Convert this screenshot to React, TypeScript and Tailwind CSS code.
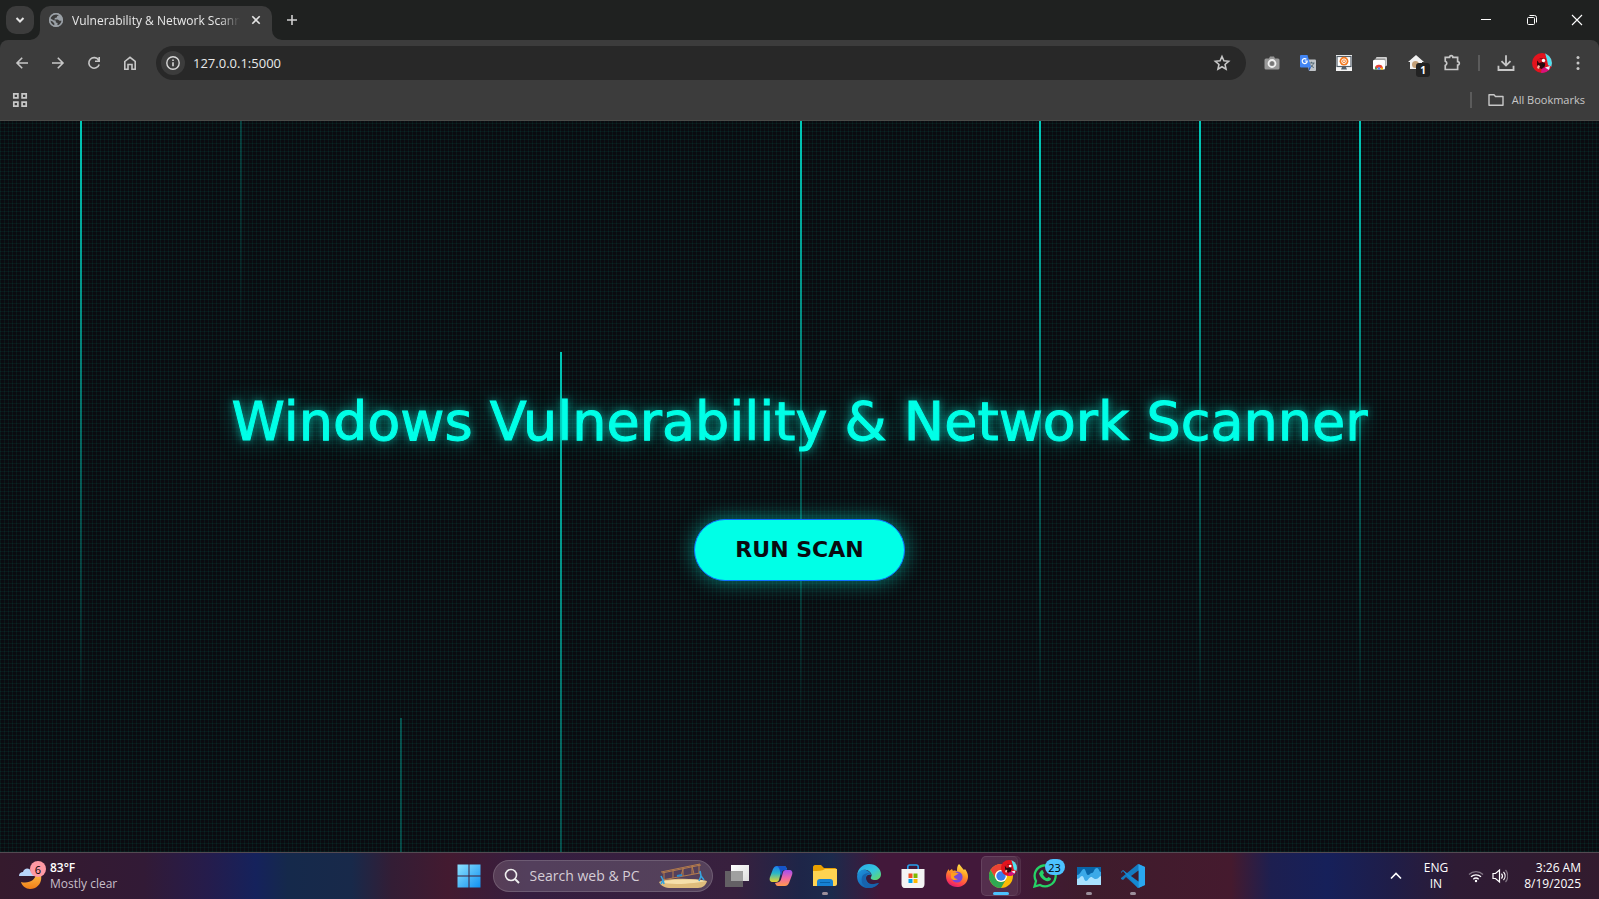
import type { ReactNode } from "react";

type IconProps = { className?: string };

function Stroke({ children, className = "size-4", width = 1.6 }: { children: ReactNode; className?: string; width?: number }) {
  return (
    <svg viewBox="0 0 16 16" className={className} fill="none" stroke="currentColor" strokeWidth={width} aria-hidden="true">
      {children}
    </svg>
  );
}

function IconButton({ label, children, className = "w-9" }: { label: string; children: ReactNode; className?: string }) {
  return (
    <button type="button" aria-label={label} className={`flex h-8 shrink-0 items-center justify-center text-[#c7c7c7] ${className}`}>
      {children}
    </button>
  );
}

function Globe() {
  return (
    <svg viewBox="0 0 16 16" className="size-4 shrink-0" aria-hidden="true">
      <circle cx="8" cy="8" r="7" fill="#9aa0a6" />
      <path d="M6.600 2.200 9.800 2l1 1.400-1.600.5-.4 1.700-1.900.5-.5 1.300h3.500l1.500 1.400 2.600-.1c-.1 2-1 3.600-2.600 4.500l-2-.3.2-2-1.700-.5-.3-1.800-2.100-.4L2.100 6.200C2.700 4.300 4.500 2.700 6.600 2.200Z" fill="#3c3c3c" />
      <path d="m2 8.600 2.600 1 1.800 1.900-.2 2.300C4 13.200 2.200 11.300 2 8.600Z" fill="#3c3c3c" />
      <circle cx="8" cy="8" r="6.300" fill="none" stroke="#9aa0a6" strokeWidth="1.400" />
    </svg>
  );
}

function Avatar({ className = "size-5" }: IconProps) {
  return (
    <svg viewBox="0 0 20 20" className={className} aria-hidden="true">
      <clipPath id="avatar-clip"><circle cx="10" cy="10" r="10" /></clipPath>
      <g clipPath="url(#avatar-clip)">
        <rect width="20" height="20" fill="#e3131d" />
        <path d="M13 0h7v14l-4-2-1-5Z" fill="#4fe0ee" />
        <path d="m10 14 9 1-4 5H9Z" fill="#d6127f" />
        <path d="M13 14.500 18 13l-1 4Z" fill="#e9f6fa" />
        <path d="M5 8c2-3 7-4 9-2l-1 6-3 4-3-1-2-3Z" fill="#33070e" />
        <path d="M4.500 6.500 13 5l2 4-1 2-3-2-4 1Z" fill="#d41520" />
        <circle cx="11.500" cy="7.500" r="1.700" fill="#fff" />
        <path d="m6 12 2 1-1 3-2-1Z" fill="#f3b5a5" />
        <path d="m10 11 3 .5-1 4Z" fill="#111" />
      </g>
    </svg>
  );
}

function Camera() {
  return (
    <svg viewBox="0 0 16 16" className="size-4" aria-hidden="true">
      <path d="M2 3.500h3L6 1.500h4l1 2h3A1.500 1.500 0 0 1 15.500 5v8a1.500 1.500 0 0 1-1.500 1.500H2A1.500 1.500 0 0 1 .5 13V5A1.500 1.500 0 0 1 2 3.500Z" fill="#999" />
      <circle cx="8" cy="8.500" r="3.500" fill="none" stroke="#f1f1f1" strokeWidth="1.800" />
      <circle cx="8" cy="8.500" r="2" fill="#777" />
    </svg>
  );
}

function Translate() {
  return (
    <svg viewBox="0 0 16 16" className="size-4" aria-hidden="true">
      <path d="M6 4.500h9a1 1 0 0 1 1 1V15a1 1 0 0 1-1 1H9Z" fill="#bfc3c7" />
      <path d="M9 8h5.500M11.500 6.800V8M13.500 8c-.4 2.200-1.900 3.800-4 4.500M10.300 9.500c.8 1.500 2 2.500 3.600 3.100" stroke="#546a76" strokeWidth="1" fill="none" />
      <path d="M1 0h6.500L11 12.500H1a1 1 0 0 1-1-1V1a1 1 0 0 1 1-1Z" fill="#4285f4" />
      <path d="M8.600 12.500H11L9 16Z" fill="#1a54c4" />
      <path d="M4.800 6h2.400a2.500 2.500 0 1 1-.8-1.800" stroke="#fff" strokeWidth="1.200" fill="none" />
    </svg>
  );
}

function MonitorExtension() {
  return (
    <svg viewBox="0 0 16 16" className="size-4" aria-hidden="true">
      <rect width="16" height="16" fill="#f4f4f4" />
      <rect x="1" y="1.500" width="14" height="10" fill="#fff" stroke="#55606b" strokeWidth="1.200" />
      <circle cx="8" cy="6.200" r="4.400" fill="#f47a20" />
      <circle cx="8" cy="6.200" r="2.300" fill="none" stroke="#fff" />
      <circle cx="8" cy="6.200" r=".9" fill="#fff" />
      <path d="M6 12h4l1 2.500H5Z" fill="#55606b" />
    </svg>
  );
}

function Stack() {
  return (
    <svg viewBox="0 0 16 16" className="size-4" aria-hidden="true">
      <rect x="4" y="2" width="11" height="9" rx="1" fill="#cfcfcf" />
      <rect x="2.500" y="3.500" width="11" height="9" rx="1" fill="#999" />
      <rect x="1" y="5" width="12" height="9.500" rx="1" fill="#fff" />
      <path d="M3 14.500a4 4 0 0 1 8-1.500l-2.500.2a2 2 0 0 0-2.700 0Z" fill="#ea4335" />
      <path d="M3 14.500a4 4 0 0 1 .6-2.800l1.900 2.800Z" fill="#34a853" />
      <path d="M8.500 14.500 9 12.500l2 .5v1.500Z" fill="#fbbc04" />
      <circle cx="7" cy="13.500" r="1.300" fill="#4285f4" />
    </svg>
  );
}

function Rain() {
  return (
    <div className="pointer-events-none absolute inset-0 overflow-hidden" aria-hidden="true">
      <i className="absolute left-[5%] top-0 h-[82%] w-[2px] bg-linear-to-b from-[#00c8b8] to-transparent" />
      <i className="absolute left-[15%] top-0 h-[30%] w-[2px] bg-linear-to-b from-[#00c8b8]/25 to-transparent" />
      <i className="absolute left-1/4 top-[597px] h-full w-[2px] bg-linear-to-b from-[#00c8b8]/35 to-transparent" />
      <i className="absolute left-[35%] top-[231px] h-full w-[2px] bg-linear-to-b from-[#00c8b8] to-transparent" />
      <i className="absolute left-1/2 top-0 h-[82%] w-[2px] bg-linear-to-b from-[#00c8b8] to-transparent" />
      <i className="absolute left-[65%] top-0 h-[82%] w-[2px] bg-linear-to-b from-[#00c8b8] to-transparent" />
      <i className="absolute left-3/4 top-0 h-[82%] w-[2px] bg-linear-to-b from-[#00c8b8] to-transparent" />
      <i className="absolute left-[85%] top-0 h-[82%] w-[2px] bg-linear-to-b from-[#00c8b8] to-transparent" />
    </div>
  );
}

function TabStrip() {
  return (
    <header className="flex h-10 shrink-0 items-start bg-[#1f2120]">
      <button type="button" aria-label="Search tabs" className="ml-1.5 mt-1.5 flex size-7 shrink-0 items-center justify-center rounded-[10px] bg-[#3c3c3c] text-[#e3e3e3]">
        <Stroke width={2}><path d="m4.500 6 3.500 3.500L11.500 6" /></Stroke>
      </button>
      <div className="relative ml-1.5 mt-1.5 flex h-[34px] w-[232px] shrink-0 items-center rounded-t-[10px] bg-[#3c3c3c] pb-1.5 pl-2 pr-2">
        <svg viewBox="0 0 10 10" className="absolute -left-[10px] bottom-0 size-[10px]" aria-hidden="true"><path d="M10 0v10H0A10 10 0 0 0 10 0Z" fill="#3c3c3c" /></svg>
        <svg viewBox="0 0 10 10" className="absolute -right-[10px] bottom-0 size-[10px]" aria-hidden="true"><path d="M0 0v10h10A10 10 0 0 1 0 0Z" fill="#3c3c3c" /></svg>
        <Globe />
        <span className="ml-2 min-w-0 flex-1 overflow-hidden whitespace-nowrap pt-0.5 text-[12px] leading-4 text-[#e8e8e8] mask-r-from-88% mask-r-to-100%">Vulnerability &amp; Network Scanner</span>
        <button type="button" aria-label="Close tab" className="ml-2 flex size-4 items-center justify-center text-[#e3e3e3]">
          <Stroke width={1.6}><path d="m4.300 4.300 7.400 7.400m0-7.400-7.400 7.400" /></Stroke>
        </button>
      </div>
      <button type="button" aria-label="New tab" className="ml-1.5 mt-1.5 flex size-7 items-center justify-center text-[#d0d0d0]">
        <Stroke><path d="M8 3v10M3 8h10" /></Stroke>
      </button>
      <div className="ml-auto flex text-white">
        <button type="button" aria-label="Minimize" className="flex h-10 w-[46px] items-center justify-center"><Stroke width={1}><path d="M3 7.500h10" /></Stroke></button>
        <button type="button" aria-label="Restore" className="flex h-10 w-[46px] items-center justify-center">
          <Stroke width={1}><rect x="3.500" y="5.500" width="7" height="7" rx="1" /><path d="M5.500 3.500h5a2 2 0 0 1 2 2v5" /></Stroke>
        </button>
        <button type="button" aria-label="Close" className="flex h-10 w-[44px] items-center justify-center"><Stroke width={1.1}><path d="m3 3 10 10m0-10L3 13" /></Stroke></button>
      </div>
    </header>
  );
}

function Toolbar() {
  return (
    <div className="flex h-[46px] shrink-0 items-center rounded-t-lg bg-[#3c3c3c] pl-1 pr-[3px]">
      <IconButton label="Back"><Stroke><path d="M14 8H3m5.200-5.300L3 8l5.200 5.300" /></Stroke></IconButton>
      <IconButton label="Forward"><Stroke><path d="M2 8h11M7.800 2.700 13 8l-5.200 5.300" /></Stroke></IconButton>
      <IconButton label="Reload"><Stroke><path d="M13.200 9.500A5.300 5.300 0 1 1 12.600 5M13.200 2v4.200H9" /></Stroke></IconButton>
      <IconButton label="Home"><Stroke><path d="M2.800 6.500 8 2.300l5.200 4.200v7.700H10V9.500H6v4.700H2.800Z" /></Stroke></IconButton>
      <div className="ml-2 flex h-[34px] min-w-0 flex-1 items-center rounded-full bg-[#282828] pl-[5px] pr-1.5">
        <button type="button" aria-label="Site information" className="flex size-6 shrink-0 items-center justify-center rounded-full bg-[#3c3c3c] text-[#d8d8d8]">
          <Stroke width={1.4}><circle cx="8" cy="8" r="6.200" /><path d="M8 7.200v4M8 4.500V6" strokeWidth="1.600" /></Stroke>
        </button>
        <input aria-label="Address" defaultValue="127.0.0.1:5000" className="ml-2 min-w-0 flex-1 bg-transparent text-[13px] leading-5 text-[#e8e8e8] outline-none" />
        <IconButton label="Bookmark this tab">
          <Stroke width={1.4} className="size-[18px]"><path d="m8 2.200 1.700 3.900 4.200.4-3.200 2.800.9 4.200L8 11.300l-3.600 2.200.9-4.200L2.100 6.500l4.200-.4Z" /></Stroke>
        </IconButton>
      </div>
      <div className="ml-2 flex items-center">
        <IconButton label="Screenshot"><Camera /></IconButton>
        <IconButton label="Translate"><Translate /></IconButton>
        <IconButton label="Screen recorder"><MonitorExtension /></IconButton>
        <IconButton label="Window extension"><Stack /></IconButton>
        <IconButton label="Home extension" className="relative w-9">
          <svg viewBox="0 0 16 16" className="size-4" aria-hidden="true"><path d="M8 0 0 7h2v7h12V7h2Z" fill="#f1f1f1" /><circle cx="7.500" cy="9.500" r="3.500" fill="#c3a078" /></svg>
          <span className="absolute bottom-0.5 right-1 flex h-[14px] w-[14px] items-center justify-center rounded-[3px] bg-[#222] text-[10px] font-bold leading-none text-white">1</span>
        </IconButton>
        <IconButton label="Extensions">
          <Stroke className="size-[18px]" width={1.5}><path d="M2 3h3.800a1.500 1.500 0 0 1 3 0h4.200v3.800a1.500 1.500 0 0 1 0 3v4H2v-3.600a2 2 0 0 0 0-3.800Z" /></Stroke>
        </IconButton>
        <div className="mx-2 h-4 w-[2px] bg-[#5b5b5b]" />
        <IconButton label="Downloads">
          <Stroke className="size-[18px]"><path d="M8 1v9M4 6.300l4 4 4-4M1.300 10.500v3.700h13.400v-3.700" /></Stroke>
        </IconButton>
        <IconButton label="Profile"><Avatar /></IconButton>
        <IconButton label="Menu">
          <svg viewBox="0 0 16 16" className="size-4" fill="currentColor" aria-hidden="true"><circle cx="8" cy="2.500" r="1.500" /><circle cx="8" cy="8" r="1.500" /><circle cx="8" cy="13.500" r="1.500" /></svg>
        </IconButton>
      </div>
    </div>
  );
}

function BookmarksBar() {
  return (
    <nav aria-label="Bookmarks" className="flex h-[35px] shrink-0 items-center justify-between border-b border-[#4b4b49] bg-[#3c3c3c] pb-1.5 pl-3 pr-3.5 text-[#c7c7c7]">
      <button type="button" aria-label="Apps"><Stroke width={1.7}><path d="M1.800 1.800h4.100v4.100H1.800Zm8.300 0h4.100v4.100h-4.100ZM1.800 10.100h4.100v4.100H1.800Zm8.300 0h4.100v4.100h-4.100Z" /></Stroke></button>
      <div className="flex items-center">
        <div className="mr-4 h-4 w-[2px] bg-[#5b5b5b]" />
        <button type="button" className="flex items-center gap-2 text-[11px] leading-4">
          <Stroke width={1.4}><path d="M1 13.300V2.700h5l1.500 1.800H15v8.800Z" strokeLinejoin="round" /></Stroke>
          All Bookmarks
        </button>
      </div>
    </nav>
  );
}

function TaskButton({ label, children, dot, active }: { label: string; children: ReactNode; dot?: boolean; active?: boolean }) {
  return (
    <button type="button" aria-label={label} className="relative flex h-[46px] w-11 shrink-0 items-center justify-center">
      {active && <span className="absolute left-0.5 top-[3px] h-10 w-10 rounded-[5px] border border-white/5 bg-white/5" />}
      {active && <span className="absolute left-0.5 top-[3px] h-10 w-[37px] rounded-[5px] border border-white/5 bg-white/5" />}
      <span className="relative">{children}</span>
      {dot && <span className="absolute bottom-1 h-[3px] w-1.5 rounded-full bg-[#9c8f9b]" />}
      {active && <span className="absolute bottom-1 h-[3px] w-4 rounded-full bg-[#4cc2ff]" />}
    </button>
  );
}

function AppIcon({ children }: { children: ReactNode }) {
  return <svg viewBox="0 0 24 24" className="size-6" aria-hidden="true">{children}</svg>;
}

function Glider() {
  return (
    <svg viewBox="0 0 50 26" className="h-[26px] w-[50px]" aria-hidden="true">
      <path d="M1 19c7-4 34-4 48-1-1 4-4 7-9 7H13c-6 0-10-2-12-6Z" fill="#dfbd7c" />
      <path d="M3 19c10-3 34-3 45-1-8 2-35 5-45 1Z" fill="#f5dfaa" />
      <path d="M3 9 42 1M4 10 43 2M4 17l38-7M6 9v8m9-10v8m10-10v8m9-10v8m7-10v9M25 6l-2 7M34 3l2 8" stroke="#b57c4c" strokeWidth="1" fill="none" />
      <path d="m19 13 5-1" stroke="#268bd0" strokeWidth="2" />
      <path d="m3 13 2 4-2 4m2-4 1 4M42 8l1 5-2 5m2-5 3 4" stroke="#36a3de" strokeWidth="1.600" fill="none" />
    </svg>
  );
}

function Taskbar() {
  return (
    <footer className="grid h-[47px] shrink-0 grid-cols-[1fr_auto_1fr] items-center border-t border-[#544a52] bg-[linear-gradient(90deg,#351a2d_0%,#321a36_9%,#251c4c_13%,#15225c_16%,#15294b_18%,#18294a_22%,#331d35_24.5%,#431a30_28%,#351e40_33%,#38203e_46%,#1e2548_50%,#1c2a4c_52%,#42183a_55%,#42183a_62%,#3e1c2c_68%,#451a2e_77%,#1d1f50_79.5%,#16205a_83%,#1f1d48_87%,#2e1b34_91%,#321b2e_100%)] text-white">
      <button type="button" className="flex items-center gap-2 justify-self-start pl-[18px] text-left">
        <span className="relative block h-[30px] w-6">
          <svg viewBox="0 0 24 30" className="h-[30px] w-6" aria-hidden="true">
            <defs><linearGradient id="moon" x2="0" y2="1"><stop stopColor="#ffc44f" /><stop offset="1" stopColor="#f07d16" /></linearGradient></defs>
            <path d="M22 11c4 9-2 17-10 17-4 0-8-3-9-7 8 2 15-2 15-9Z" fill="url(#moon)" />
            <path d="M1 15c0-3 2-4 4-4 1-4 6-5 8-1l4 5H1Z" fill="#b9d5fa" />
          </svg>
          <span className="absolute left-3 top-0 flex size-4 items-center justify-center rounded-full bg-[#ff99a4] text-[11px] leading-none text-black">6</span>
        </span>
        <span className="block text-[12px] leading-4"><span className="block font-semibold">83°F</span><span className="block text-[#c8bfc9]">Mostly clear</span></span>
      </button>

      <div className="flex items-center pl-0.5">
        <TaskButton label="Start">
          <AppIcon>
            <defs><linearGradient id="win" x2="1" y2="1"><stop stopColor="#8de2ff" /><stop offset="1" stopColor="#1090f0" /></linearGradient></defs>
            <path d="M.5.500H11.500V11.500H.5Zm12 0H23.500V11.500H12.500ZM.5 12.500H11.500V23.500H.5Zm12 0H23.500V23.500H12.500Z" fill="url(#win)" />
          </AppIcon>
        </TaskButton>
        <label className="mx-0.5 flex h-8 w-[220px] items-center rounded-full border border-white/15 bg-white/15 pl-2.5 pr-1">
          <Stroke className="size-4 shrink-0 text-[#eee]" width={1.6}><circle cx="7" cy="7" r="5.500" /><path d="m11 11 4 4" strokeWidth="2" /></Stroke>
          <input aria-label="Search web and PC" placeholder="Search web & PC" className="ml-2.5 w-0 min-w-0 flex-1 bg-transparent text-[14px] leading-5 outline-none placeholder:text-[#d5cdd6]" />
          <Glider />
        </label>
        <TaskButton label="Task view">
          <AppIcon>
            <defs><linearGradient id="tv" x2="1" y2="1"><stop stopColor="#fff" /><stop offset="1" stopColor="#ddd" /></linearGradient></defs>
            <path d="M6 1h18v16H6Z" fill="url(#tv)" /><path d="M0 7h18v16H0Z" fill="#6c6c6c" fillOpacity=".85" /><path d="M6 7h12v10H6Z" fill="#a0a0a0" />
          </AppIcon>
        </TaskButton>
        <TaskButton label="Copilot">
          <AppIcon>
            <defs>
              <linearGradient id="cp1" x2="0" y2="1"><stop stopColor="#1c7df0" /><stop offset=".45" stopColor="#28b7c9" /><stop offset="1" stopColor="#e9d52c" /></linearGradient>
              <linearGradient id="cp2" x2="0" y2="1"><stop stopColor="#a14ff0" /><stop offset=".5" stopColor="#f067a6" /><stop offset="1" stopColor="#ff9a4c" /></linearGradient>
            </defs>
            <path d="M8 2h7c2 0 2 1 3 3l-4 1c-2 1-2 3-3 6l-1 4c-1 2-2 2-4 2H4c-3 0-4-2-3-5l3-8c1-2 2-3 4-3Z" fill="url(#cp1)" />
            <path d="M16 22H9c-2 0-2-1-3-3l4-1c2-1 2-3 3-6l1-4c1-2 2-2 4-2h2c3 0 4 2 3 5l-3 8c-1 2-2 3-4 3Z" fill="url(#cp2)" />
            <path d="M8 2h7c2 0 2 1 3 4h-2c-2 0-3 1-3 3l-1 3c-1-5-1-8-4-10Z" fill="#1554c8" />
          </AppIcon>
        </TaskButton>
        <TaskButton label="File Explorer" dot>
          <AppIcon>
            <path d="M0 3c0-1 1-2 2-2h6l3 3h11c1 0 2 1 2 2v6H0Z" fill="#e9a000" />
            <path d="M0 7c5 0 9 0 12-2h12v15c0 1-1 2-2 2H0Z" fill="#ffd351" />
            <path d="M4 22v-4c0-2 1-3 3-3h10c2 0 3 1 3 3v4Z" fill="#1681d3" /><path d="M7 18h10v1H7Z" fill="#0862a9" />
          </AppIcon>
        </TaskButton>
        <TaskButton label="Edge">
          <AppIcon>
            <defs>
              <linearGradient id="eg1" x2="1" y2="1"><stop stopColor="#28a9eb" /><stop offset=".55" stopColor="#35c6dc" /><stop offset="1" stopColor="#67dc5a" /></linearGradient>
              <linearGradient id="eg2" x2="1" y2="1"><stop stopColor="#1e95df" /><stop offset="1" stopColor="#104d9b" /></linearGradient>
            </defs>
            <path d="M.2 11C1 4 6 0 12 0c7 0 12 5 12 10 0 4-3 6-6 6s-5-1-4-3c1-1 1-3-1-5C9 4 3 6 .2 11Z" fill="url(#eg1)" />
            <path d="M.1 12C1 7 5 5 9 6c3 1 5 3 5 5-2-1-5 0-5 3 0 4 4 7 8 6 3 0 4-1 5-1-3 4-8 6-13 5C3 22 0 18 .1 12Z" fill="url(#eg2)" />
            <path d="M9 23c-4-2-5-6-4-10 1-3 4-4 8-4-3 1-5 3-4 6 0 4 4 6 8 5l5-1c-3 4-8 6-13 4Z" fill="#1763ad" />
          </AppIcon>
        </TaskButton>
        <TaskButton label="Microsoft Store">
          <AppIcon>
            <path d="M6.800 7V3c0-1 .7-2 2-2h6.400c1.300 0 2 1 2 2v4" fill="none" stroke="#27a0ed" strokeWidth="1.600" />
            <path d="M.5 5h23v15c0 2-1 4-3 4H3.500c-2 0-3-2-3-4Z" fill="#f4f4f4" />
            <path d="M7.500 9.500h4V14h-4Z" fill="#f25022" /><path d="M12.500 9.500h4V14h-4Z" fill="#7fba00" /><path d="M7.500 15h4v4h-4Z" fill="#00a4ef" /><path d="M12.500 15h4v4h-4Z" fill="#ffb900" />
          </AppIcon>
        </TaskButton>
        <TaskButton label="Firefox">
          <AppIcon>
            <defs><linearGradient id="ff" x1=".7" x2=".3" y2="1"><stop stopColor="#ffe84c" /><stop offset=".4" stopColor="#ff9a22" /><stop offset=".8" stopColor="#ff3c50" /><stop offset="1" stopColor="#d91878" /></linearGradient></defs>
            <path d="M14 0c2 2 3 4 5 6l1-1c3 4 4 8 2 12-2 4-6 6-10 6C6 23 1 19 1 12c0-3 1-5 3-7v2l3-2 1 2c2-1 3 0 4 0 0-3 0-5 2-7Z" fill="url(#ff)" />
            <circle cx="12" cy="13" r="5.600" fill="#7848d8" />
            <path d="M6 9c3-1 5-1 8 1-3 0-3 2-5 2 0 2 1 3 4 3-3 2-6 1-7-1Z" fill="#ff9e1f" />
          </AppIcon>
        </TaskButton>
        <TaskButton label="Google Chrome" active>
          <AppIcon>
            <circle cx="12" cy="12" r="12" fill="#fbbc04" />
            <path d="M1.600 6A12 12 0 0 1 22.400 6H12a6 6 0 0 0-5.200 9Z" fill="#ea4335" />
            <path d="M1.600 6A12 12 0 0 0 12 24l5.200-9A6 6 0 0 1 6.800 15Z" fill="#30a852" />
            <circle cx="12" cy="12" r="6" fill="#fff" /><circle cx="12" cy="12" r="4.700" fill="#3b7ded" />
          </AppIcon>
          <span className="absolute -right-1 -top-1"><Avatar className="size-4" /></span>
        </TaskButton>
        <TaskButton label="WhatsApp">
          <AppIcon>
            <path d="M1.500 22.500 3 17a10.500 10.500 0 1 1 4 4Z" fill="none" stroke="#25d366" strokeWidth="2.300" />
            <path d="M8 6.500 9.500 6l1.500 3-1 1.500c1 2 2 3 4 3.800l1.500-1.300 2.500 1.500c0 2-2 3-4 2.700-4-1-7-4-8-7.700Z" fill="#25d366" />
          </AppIcon>
          <span className="absolute -top-[5px] left-3 flex h-4 w-5 items-center justify-center rounded-full bg-[#4cc2ff] text-[11px] leading-none text-black">23</span>
        </TaskButton>
        <TaskButton label="System monitor" dot>
          <AppIcon>
            <path d="M0 3h24v9H0Z" fill="#0865a8" /><path d="M0 11c4 0 4-6 7-6 2 0 2 6 4 6s2-2 4-2 2-5 5-5c2 0 2 4 4 4v13H0Z" fill="#3ba9e8" />
            <path d="M0 15c3 0 3-3 5-3s2 5 4 5 3-4 5-4 2 2 5 2 3-3 5-3v9H0Z" fill="#a9e2ff" />
          </AppIcon>
        </TaskButton>
        <TaskButton label="Visual Studio Code" dot>
          <AppIcon>
            <path d="M17 0 24 3v18l-7 3L5 13l-3 3-2-1v-1L17 0Z" fill="#147bc0" />
            <path d="m2 7 15 17 .5-6L2 6 0 8v1Z" fill="#1589d2" />
            <path d="M17.500 0 24 3v18l-6.500 3Z" fill="#2aa7f0" /><path d="M17.500 6.500v11L10 12Z" fill="#3e1c2c" />
          </AppIcon>
        </TaskButton>
      </div>

      <div className="flex items-center justify-self-end pr-[18px] text-[12px] leading-4">
        <button type="button" aria-label="Show hidden icons" className="mr-5"><Stroke className="size-4" width={1.6}><path d="m3 10.500 5-5 5 5" /></Stroke></button>
        <button type="button" className="mr-5 text-center">ENG<br />IN</button>
        <button type="button" aria-label="Network and volume" className="mr-4 flex items-center gap-2">
          <Stroke className="size-4" width={1.3}><path d="M1 6.500a10 10 0 0 1 14 0" strokeOpacity=".4" /><path d="M3 8.800a7.200 7.200 0 0 1 10 0M5.300 11.200a4 4 0 0 1 5.400 0" /><circle cx="8" cy="13" r="1.200" fill="currentColor" stroke="none" /></Stroke>
          <Stroke className="size-4" width={1.2}><path d="M1 5.500h2.500L7.500 2v12l-4-3.500H1ZM9.500 5.500a4 4 0 0 1 0 5M11.500 3.800a6.500 6.500 0 0 1 0 8.400" /><path d="M13.500 2a9 9 0 0 1 0 12" strokeOpacity=".4" /></Stroke>
        </button>
        <button type="button" className="text-right">3:26 AM<br />8/19/2025</button>
      </div>
    </footer>
  );
}

export default function App() {
  return (
    <div className="flex min-h-screen flex-col bg-[#1f2120] font-['Open_Sans','Noto_Sans',sans-serif]">
      <TabStrip />
      <Toolbar />
      <BookmarksBar />
      <main className="relative flex flex-1 flex-col items-center justify-center gap-[67px] overflow-hidden bg-[#0a0b10] bg-[repeating-linear-gradient(0deg,rgba(0,255,200,0.055)_0_1px,transparent_1px_4px),repeating-linear-gradient(90deg,rgba(0,255,200,0.055)_0_1px,transparent_1px_4px)] font-['DejaVu_Sans',sans-serif]">
        <Rain />
        <h1 className="relative whitespace-nowrap text-center text-[54px] leading-[60px] text-[#00ffe7] [-webkit-text-stroke:1px_#00ffe7] [text-shadow:0_0_8px_#00ffe799,0_0_20px_#00ffe780]">Windows Vulnerability &amp; Network Scanner</h1>
        <button type="button" className="relative h-[62px] rounded-full border border-[#0f6fff] bg-[#00ffe7] px-10 text-[22px] font-bold leading-7 text-[#0a0b10] shadow-[0_0_20px_#00ffe780]">RUN SCAN</button>
      </main>
      <Taskbar />
    </div>
  );
}
